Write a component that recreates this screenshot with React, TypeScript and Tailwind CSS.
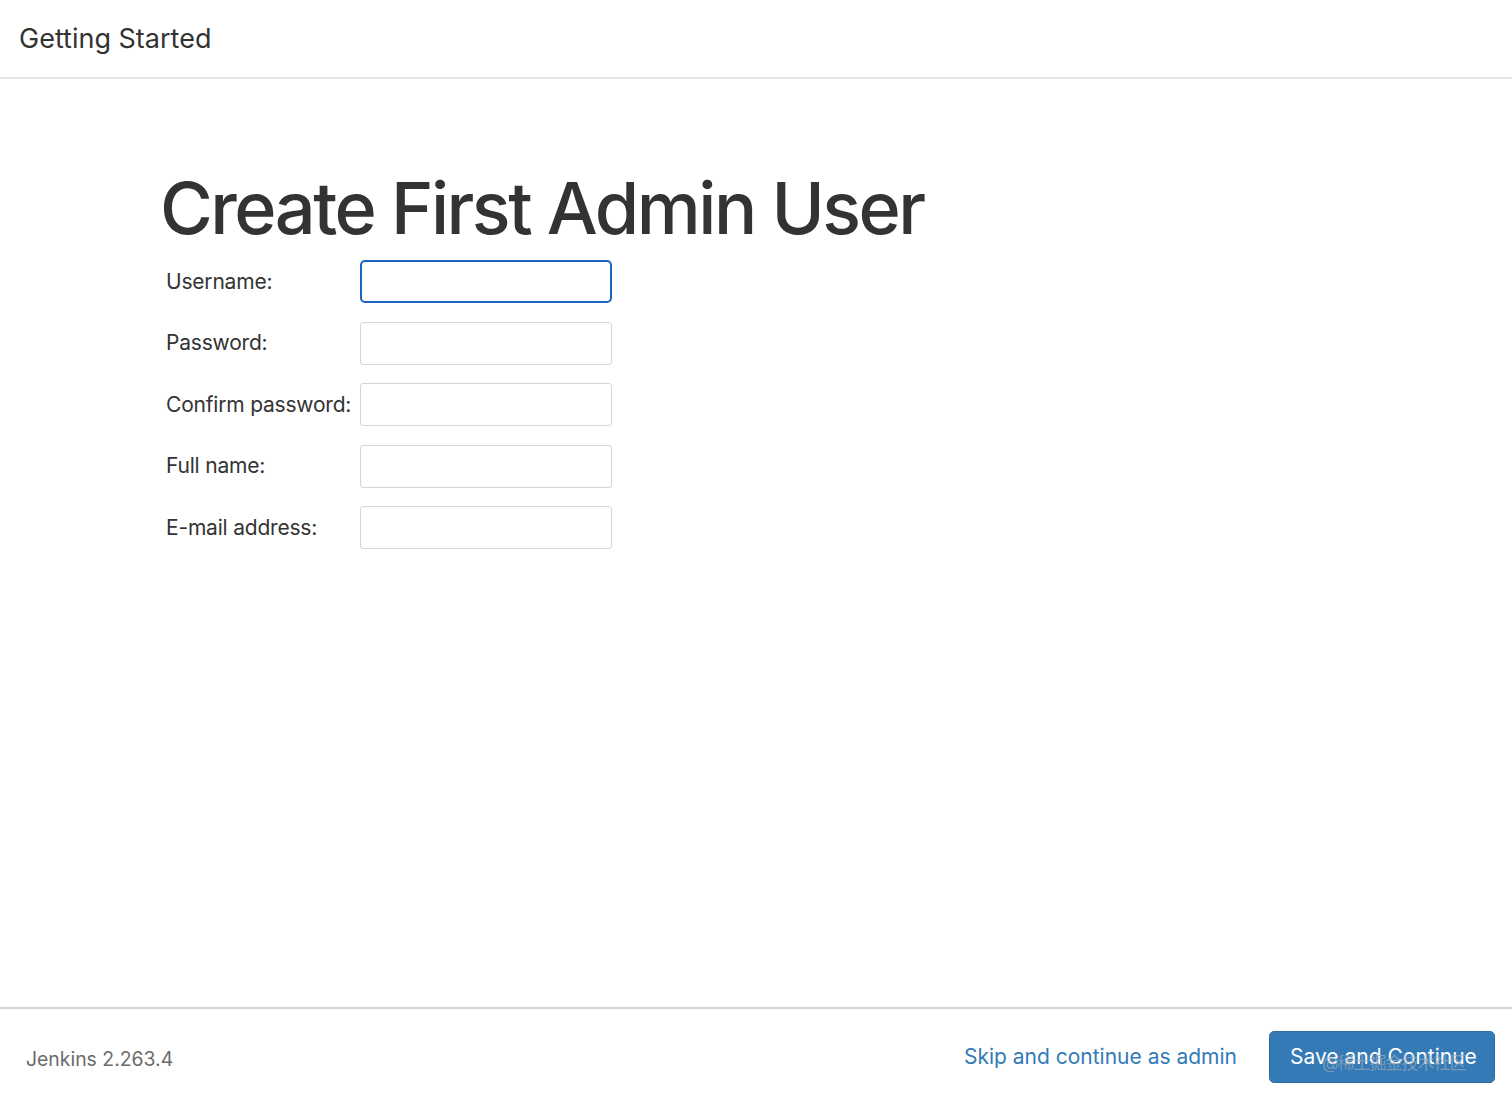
export default function App() {
  const fields = [
    { label: 'Username:', type: 'text', focused: true },
    { label: 'Password:', type: 'password' },
    { label: 'Confirm password:', type: 'password' },
    { label: 'Full name:', type: 'text' },
    { label: 'E-mail address:', type: 'text' },
  ];

  return (
    <div
      className="h-[1101px] w-full flex flex-col bg-white text-[#333]"
      style={{ fontFamily: 'Inter, "Noto Sans", "Noto Sans CJK SC", sans-serif' }}
    >
      <header className="h-[79px] shrink-0 flex items-center px-[19px] border-b-2 border-[#e5e5e5]">
        <h1 className="text-[27px] leading-none text-[#333] -mt-[1px]">Getting Started</h1>
      </header>

      <main className="flex-1 pl-[160px] pt-[89px]">
        <h2 className="text-[72px] leading-[80px] font-medium tracking-[-2.5px] text-[#333]">
          Create First Admin User
        </h2>
        <div className="mt-[12px] pl-[6px] flex flex-col gap-[18.5px]">
          {fields.map((f) => (
            <div key={f.label} className="flex items-center">
              <label className="w-[194px] text-[21px] tracking-[-0.2px] text-[#333]">{f.label}</label>
              <input
                type={f.type}
                className={
                  f.focused
                    ? 'w-[252px] h-[43px] rounded-[5px] border-2 border-[#1d64c0] outline-none'
                    : 'w-[252px] h-[43px] rounded-[3px] border border-[#d4d4d4] outline-none'
                }
              />
            </div>
          ))}
        </div>
      </main>

      <footer className="h-[94px] shrink-0 border-t-2 border-[#d5d5d5] flex items-center justify-between pl-[26px] pr-[17px] pt-[4px]">
        <span className="text-[19.4px] text-[#6b6b6b] pt-[5px]">Jenkins 2.263.4</span>
        <div className="flex items-center gap-[32px]">
          <a className="text-[21px] text-[#337ab7]">Skip and continue as admin</a>
          <button className="relative w-[226px] h-[52px] rounded-[5px] bg-[#337ab7] border border-[#2e6da4] text-white text-[21px] text-left pl-[20px]">
            Save and Continue
            <span className="absolute left-[52px] top-[19px] text-[17px] text-[#9aa9b8]/70 tracking-[-1px]">
              @稀土掘金技术社区
            </span>
          </button>
        </div>
      </footer>
    </div>
  );
}
